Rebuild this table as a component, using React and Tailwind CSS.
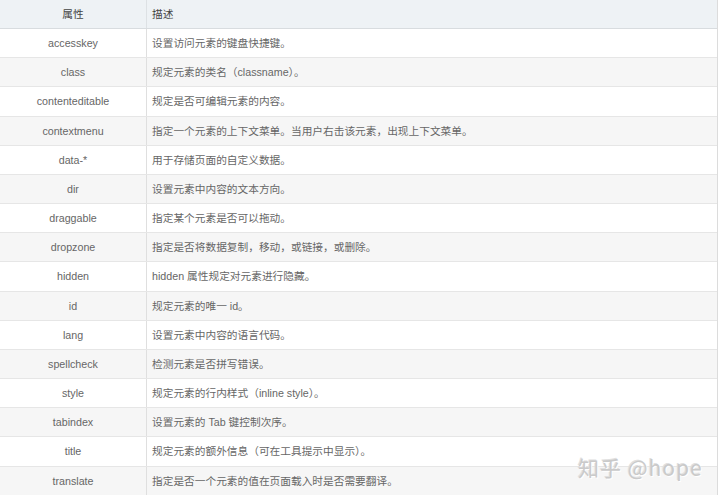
import React from 'react';

const rows = [
  ['accesskey', '设置访问元素的键盘快捷键。'],
  ['class', '规定元素的类名（classname）。'],
  ['contenteditable', '规定是否可编辑元素的内容。'],
  ['contextmenu', '指定一个元素的上下文菜单。当用户右击该元素，出现上下文菜单。'],
  ['data-*', '用于存储页面的自定义数据。'],
  ['dir', '设置元素中内容的文本方向。'],
  ['draggable', '指定某个元素是否可以拖动。'],
  ['dropzone', '指定是否将数据复制，移动，或链接，或删除。'],
  ['hidden', 'hidden 属性规定对元素进行隐藏。'],
  ['id', '规定元素的唯一 id。'],
  ['lang', '设置元素中内容的语言代码。'],
  ['spellcheck', '检测元素是否拼写错误。'],
  ['style', '规定元素的行内样式（inline style）。'],
  ['tabindex', '设置元素的 Tab 键控制次序。'],
  ['title', '规定元素的额外信息（可在工具提示中显示）。'],
  ['translate', '指定是否一个元素的值在页面载入时是否需要翻译。'],
];

export default function App() {
  return (
    <div className="relative w-[720px] h-[495px] overflow-hidden bg-white text-[10.7px] text-[#666] font-['Liberation_Sans','Noto_Sans_CJK_SC',sans-serif]">
      <div className="w-[718px] border-r border-[#dcdcdc]">
        <div className="flex h-[29px] bg-[#eef2f5] border-b border-[#d8dcdf] text-[#444]">
          <div className="w-[147px] border-r border-[#dde1e4] flex items-center justify-center">属性</div>
          <div className="flex-1 flex items-center pl-[5px]">描述</div>
        </div>
        {rows.map(([name, desc], i) => (
          <div
            key={name}
            className={`flex h-[29.18px] border-b border-[#e6e6e6] ${i % 2 === 1 ? 'bg-[#f6f6f6]' : 'bg-white'}`}
          >
            <div className="w-[147px] border-r border-[#dfdfdf] flex items-center justify-center">{name}</div>
            <div className="flex-1 flex items-center pl-[5px] whitespace-nowrap">{desc}</div>
          </div>
        ))}
      </div>

      {/* watermark */}
      <div className="absolute left-[578px] top-[452px] text-[21px] tracking-[1px] text-[#cacaca] font-['Noto_Sans_CJK_SC',sans-serif] [text-shadow:1px_1px_0_#ffffff,-1px_-1px_0_#e0e0e0]">
        知乎 @hope
      </div>
    </div>
  );
}
